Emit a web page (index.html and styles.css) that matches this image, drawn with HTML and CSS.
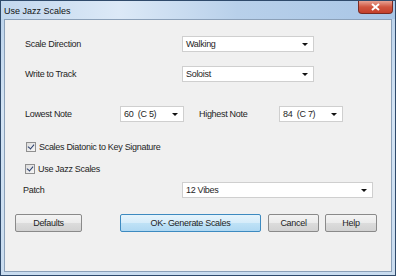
FILE: index.html
```html
<!DOCTYPE html>
<html lang="en">
<head>
    <meta charset="UTF-8">
    <title>Use Jazz Scales</title>
    <link rel="stylesheet" href="styles.css">
</head>
<body>
    <div class="window">
        <!-- Title bar -->
        <div class="titlebar">
            <span class="title">Use Jazz Scales</span>
            <button class="close-btn">
                <svg width="9" height="8" viewBox="0 0 9 8">
                    <path d="M1 1 L8 7 M8 1 L1 7" stroke="#fff" stroke-width="2"/>
                </svg>
            </button>
        </div>

        <!-- Dialog content -->
        <div class="client">
            <div class="row row-direction">
                <span class="label label-wide">Scale Direction</span>
                <div class="combo combo-mid">Walking</div>
            </div>
            <div class="row row-track">
                <span class="label label-wide">Write to Track</span>
                <div class="combo combo-mid">Soloist</div>
            </div>
            <div class="row row-notes">
                <span class="label label-low">Lowest Note</span>
                <div class="combo combo-note">60&nbsp; (C 5)</div>
                <span class="label label-high">Highest Note</span>
                <div class="combo combo-note">84&nbsp; (C 7)</div>
            </div>
            <label class="check check-diatonic">
                <span class="box"></span>
                Scales Diatonic to Key Signature
            </label>
            <label class="check check-jazz">
                <span class="box"></span>
                Use Jazz Scales
            </label>
            <div class="row row-patch">
                <span class="label label-patch">Patch</span>
                <div class="combo combo-long">12 Vibes</div>
            </div>
            <div class="buttons">
                <button class="btn btn-defaults">Defaults</button>
                <button class="btn btn-ok">OK- Generate Scales</button>
                <button class="btn btn-cancel">Cancel</button>
                <button class="btn btn-help">Help</button>
            </div>
        </div>
    </div>
</body>
</html>
```

FILE: styles.css
```css
body {
    margin: 0;
    font-family: "Liberation Sans", Arial, sans-serif;
    font-size: 9px;
    color: #1e1e1e;
    background: #fff;
}

.window {
    width: 396px;
    height: 276px;
    box-sizing: border-box;
    border: 1px solid #2f4a6b;
    background: linear-gradient(to bottom, #b9d1ea 0%, #d4e4f4 40%, #c9dcef 100%);
    display: flex;
    flex-direction: column;
}

.titlebar {
    height: 18px;
    display: flex;
    align-items: flex-start;
    justify-content: space-between;
    background: linear-gradient(to right, #c2d7ee 0%, #dce9f7 30%, #b8d0ea 60%, #a9c6e6 100%);
}

.title {
    margin: 5px 0 0 3px;
    font-size: 9px;
    color: #111;
}

.close-btn {
    width: 35px;
    height: 13px;
    margin-right: 2px;
    padding: 0;
    border: 1px solid #7a2a22;
    border-top: none;
    border-radius: 0 0 4px 4px;
    background: linear-gradient(to bottom, #e8a293 0%, #d0553f 50%, #c4402b 100%);
    display: flex;
    align-items: center;
    justify-content: center;
}

.client {
    flex: 1;
    margin: 0 3px 3px;
    border: 1px solid #8ba0b8;
    background: #f0f0f0;
    display: flex;
    flex-direction: column;
}

.row {
    display: flex;
    align-items: center;
    height: 16px;
}

.label {
    display: inline-block;
    letter-spacing: -0.3px;
}

.row-direction { margin-top: 16px; padding-left: 20px; }
.row-track { margin-top: 14px; padding-left: 20px; }
.row-notes { margin-top: 24px; padding-left: 20px; }
.row-patch { margin-top: 8px; padding-left: 18px; }

.label-wide { width: 157px; }
.label-low { width: 95px; }
.label-high { width: 80px; margin-left: 15px; }
.label-patch { width: 159px; }

.combo {
    position: relative;
    box-sizing: border-box;
    height: 16px;
    line-height: 14px;
    padding-left: 3px;
    background: #fff;
    border: 1px solid #cfcfcf;
    letter-spacing: -0.3px;
}

.combo::after {
    content: "";
    position: absolute;
    right: 5px;
    top: 6px;
    border-left: 3px solid transparent;
    border-right: 3px solid transparent;
    border-top: 3px solid #111;
}

.combo-mid { width: 132px; }
.combo-note { width: 64px; }
.combo-long { width: 191px; }

.check {
    display: flex;
    align-items: center;
    height: 10px;
    letter-spacing: -0.3px;
}

.check-diatonic { margin-top: 20px; padding-left: 21px; }
.check-jazz { margin-top: 12px; padding-left: 20px; }

.box {
    position: relative;
    width: 10px;
    height: 10px;
    box-sizing: border-box;
    margin-right: 3px;
    border: 1px solid #8f8f8f;
    background: linear-gradient(to bottom right, #dcdcdc, #f6f6f6);
}

.box::after {
    content: "";
    position: absolute;
    left: 2px;
    top: 0px;
    width: 3px;
    height: 5px;
    border-right: 1.5px solid #2a3f6e;
    border-bottom: 1.5px solid #2a3f6e;
    transform: rotate(40deg);
}

.buttons {
    display: flex;
    margin-top: 16px;
    padding-left: 10px;
}

.btn {
    height: 18px;
    box-sizing: border-box;
    padding: 0;
    font-family: "Liberation Sans", Arial, sans-serif;
    font-size: 9px;
    letter-spacing: -0.3px;
    color: #1e1e1e;
    border: 1px solid #8a8a8a;
    border-radius: 2px;
    background: linear-gradient(to bottom, #f4f4f4 0%, #ebebeb 50%, #dcdcdc 51%, #d2d2d2 100%);
}

.btn-defaults { width: 67px; }
.btn-ok {
    width: 141px;
    margin-left: 38px;
    border-color: #3d8ac0;
    background: linear-gradient(to bottom, #e6f4fc 0%, #d5ecfa 50%, #bfe2f6 51%, #afd8f2 100%);
}
.btn-cancel { width: 51px; margin-left: 7px; }
.btn-help { width: 52px; margin-left: 6px; }
```
